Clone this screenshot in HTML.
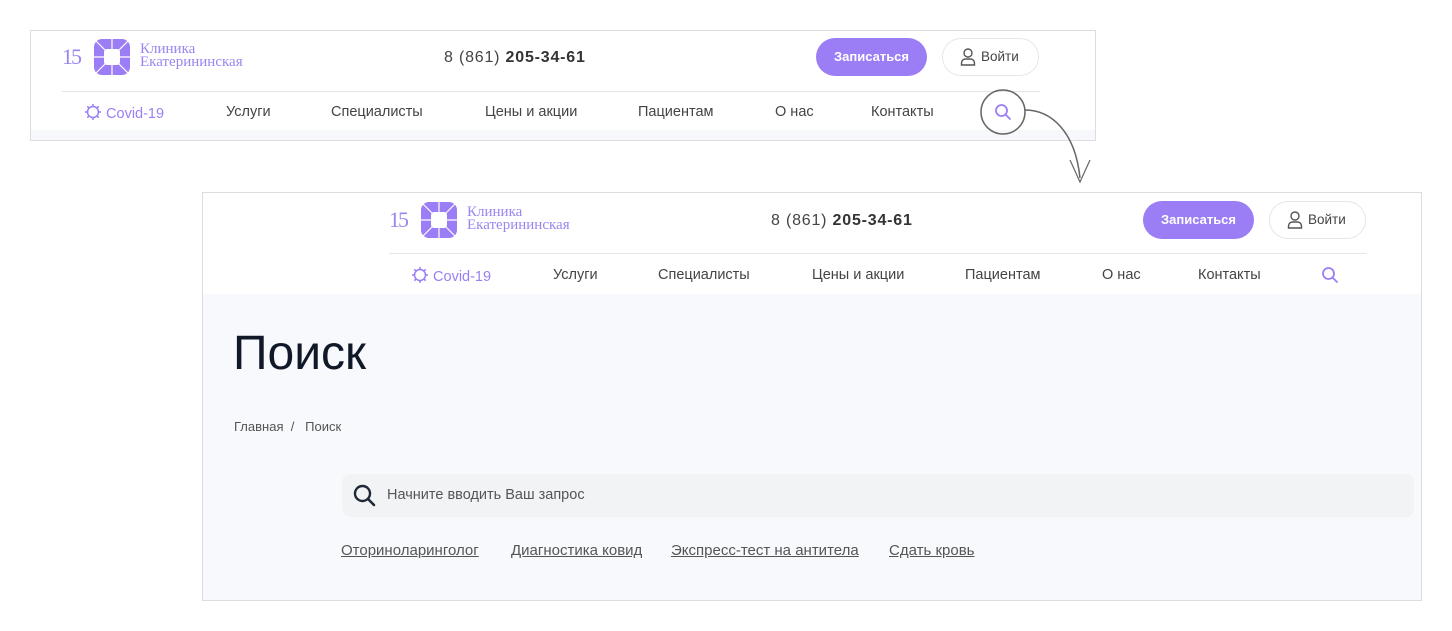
<!DOCTYPE html>
<html><head><meta charset="utf-8"><style>
*{margin:0;padding:0;box-sizing:border-box}
body{width:1452px;height:631px;background:#fff;position:relative;overflow:hidden;font-family:"Liberation Sans",sans-serif;color:#333}
.a{position:absolute;white-space:nowrap}
.hdr{position:absolute;width:1000px;height:110px}
.lt{left:78px;top:13px;font-family:"Liberation Serif",serif;color:#9b86f0;font-size:15px;line-height:13px}
.ph{font-size:16px;color:#444;letter-spacing:.8px}
.ph b{color:#333}
.btn{background:#9b7ef5;color:#fff;font-size:13px;font-weight:bold;border-radius:19px;text-align:center;line-height:38px;height:38px;width:111px}
.in{border:1px solid #e6e6ea;background:#fff;color:#444;font-size:13.5px;border-radius:19px;height:38px;width:97px;line-height:36px;padding-left:38px}
.line{height:1px;background:#e6e6ea;width:978px}
.nav{font-size:14.5px;color:#444}
.cov{color:#9b7ef5}
.lk{position:absolute;top:542px;font-size:15px;color:#555;text-decoration:underline;white-space:nowrap}
</style></head><body>

<div class="a" style="left:30px;top:30px;width:1066px;height:111px;border:1px solid #dcdce2;background:#fff"></div>
<div class="a" style="left:31px;top:130px;width:1064px;height:10px;background:#f7f8fb"></div>

<div class="a" style="left:202px;top:192px;width:1220px;height:409px;border:1px solid #dcdce2;background:#fff"></div>
<div class="a" style="left:203px;top:294px;width:1218px;height:306px;background:#f8f9fd"></div>

<div class="hdr" style="left:62px;top:30px">
 <svg class="a" style="left:0;top:7px" width="72" height="40" viewBox="0 0 72 40">
  <text x="0" y="27" font-family="Liberation Serif" font-size="22" fill="#9b86f0" letter-spacing="-2">15</text>
  <rect x="32" y="2" width="36" height="36" rx="8" fill="#9b7ef5"/>
  <rect x="42" y="12" width="16" height="16" rx="3" fill="#fff"/>
  <path d="M32 2L68 38M68 2L32 38M50 2V12M50 28V38M32 20H42M58 20H68" stroke="#fff" stroke-width="1.2"/>
 </svg>
 <div class="a lt">Клиника<br>Екатерининская</div>
 <div class="a ph" style="left:382px;top:19px">8 (861) <b>205-34-61</b></div>
 <div class="a btn" style="left:754px;top:8px">Записаться</div>
 <div class="a in" style="left:880px;top:8px">Войти
  <svg class="a" style="left:17px;top:9px" width="16" height="18" viewBox="0 0 16 18"><circle cx="8" cy="5" r="4" fill="none" stroke="#555" stroke-width="1.4"/><path d="M1.5 17v-2a4 4 0 0 1 4-4h5a4 4 0 0 1 4 4v2z" fill="none" stroke="#555" stroke-width="1.4"/></svg></div>
 <div class="a line" style="left:0;top:61px"></div>
 <div class="a nav cov" style="left:22px;top:73px">
  <svg width="18" height="18" viewBox="0 0 18 18" style="vertical-align:-3px"><circle cx="9" cy="9" r="5.5" fill="none" stroke="#9b7ef5" stroke-width="1.5"/><path d="M9 1v3M9 14v3M1 9h3M14 9h3M3.3 3.3l2 2M12.7 12.7l2 2M14.7 3.3l-2 2M5.3 12.7l-2 2" stroke="#9b7ef5" stroke-width="1.5"/></svg> Covid-19</div>
 <div class="a nav" style="left:164px;top:74px">Услуги</div>
 <div class="a nav" style="left:269px;top:74px">Специалисты</div>
 <div class="a nav" style="left:423px;top:74px">Цены и акции</div>
 <div class="a nav" style="left:576px;top:74px">Пациентам</div>
 <div class="a nav" style="left:713px;top:74px">О нас</div>
 <div class="a nav" style="left:809px;top:74px">Контакты</div>
 <svg class="a" style="left:932px;top:73px" width="18" height="18" viewBox="0 0 18 18"><circle cx="7.5" cy="7.5" r="5.5" fill="none" stroke="#9b7ef5" stroke-width="1.8"/><path d="M11.5 11.5L16 16" stroke="#9b7ef5" stroke-width="1.8" stroke-linecap="round"/></svg>
</div>

<div class="hdr" style="left:389px;top:193px">
 <svg class="a" style="left:0;top:7px" width="72" height="40" viewBox="0 0 72 40">
  <text x="0" y="27" font-family="Liberation Serif" font-size="22" fill="#9b86f0" letter-spacing="-2">15</text>
  <rect x="32" y="2" width="36" height="36" rx="8" fill="#9b7ef5"/>
  <rect x="42" y="12" width="16" height="16" rx="3" fill="#fff"/>
  <path d="M32 2L68 38M68 2L32 38M50 2V12M50 28V38M32 20H42M58 20H68" stroke="#fff" stroke-width="1.2"/>
 </svg>
 <div class="a lt">Клиника<br>Екатерининская</div>
 <div class="a ph" style="left:382px;top:19px">8 (861) <b>205-34-61</b></div>
 <div class="a btn" style="left:754px;top:8px">Записаться</div>
 <div class="a in" style="left:880px;top:8px">Войти
  <svg class="a" style="left:17px;top:9px" width="16" height="18" viewBox="0 0 16 18"><circle cx="8" cy="5" r="4" fill="none" stroke="#555" stroke-width="1.4"/><path d="M1.5 17v-2a4 4 0 0 1 4-4h5a4 4 0 0 1 4 4v2z" fill="none" stroke="#555" stroke-width="1.4"/></svg></div>
 <div class="a line" style="left:0;top:60px"></div>
 <div class="a nav cov" style="left:22px;top:73px">
  <svg width="18" height="18" viewBox="0 0 18 18" style="vertical-align:-3px"><circle cx="9" cy="9" r="5.5" fill="none" stroke="#9b7ef5" stroke-width="1.5"/><path d="M9 1v3M9 14v3M1 9h3M14 9h3M3.3 3.3l2 2M12.7 12.7l2 2M14.7 3.3l-2 2M5.3 12.7l-2 2" stroke="#9b7ef5" stroke-width="1.5"/></svg> Covid-19</div>
 <div class="a nav" style="left:164px;top:74px">Услуги</div>
 <div class="a nav" style="left:269px;top:74px">Специалисты</div>
 <div class="a nav" style="left:423px;top:74px">Цены и акции</div>
 <div class="a nav" style="left:576px;top:74px">Пациентам</div>
 <div class="a nav" style="left:713px;top:74px">О нас</div>
 <div class="a nav" style="left:809px;top:74px">Контакты</div>
 <svg class="a" style="left:932px;top:73px" width="18" height="18" viewBox="0 0 18 18"><circle cx="7.5" cy="7.5" r="5.5" fill="none" stroke="#9b7ef5" stroke-width="1.8"/><path d="M11.5 11.5L16 16" stroke="#9b7ef5" stroke-width="1.8" stroke-linecap="round"/></svg>
</div>

<svg class="a" style="left:970px;top:80px" width="130" height="110" viewBox="0 0 130 110">
 <circle cx="33" cy="32" r="22" fill="none" stroke="#666" stroke-width="1.5"/>
 <path d="M55 30C80 30 105 50 110 98" fill="none" stroke="#666" stroke-width="1.5"/>
 <path d="M100 80L110 102L120 80" fill="none" stroke="#666" stroke-width="1.2"/>
</svg>

<div class="a" style="left:233px;top:326px;font-size:48px;color:#111827">Поиск</div>
<div class="a" style="left:234px;top:419px;font-size:13px;color:#555">Главная &nbsp;/ &nbsp; Поиск</div>
<div class="a" style="left:342px;top:474px;width:1072px;height:43px;background:#f2f3f5;border-radius:8px"></div>
<svg class="a" style="left:352px;top:483px" width="26" height="26" viewBox="0 0 26 26"><circle cx="10.5" cy="10.5" r="7.5" fill="none" stroke="#1f2937" stroke-width="2.4"/><path d="M16 16L22 22" stroke="#1f2937" stroke-width="2.6" stroke-linecap="round"/></svg>
<div class="a" style="left:387px;top:487px;font-size:14.5px;color:#555">Начните вводить Ваш запрос</div>
<span class="lk" style="left:341px">Оториноларинголог</span>
<span class="lk" style="left:511px">Диагностика ковид</span>
<span class="lk" style="left:671px">Экспресс-тест на антитела</span>
<span class="lk" style="left:889px">Сдать кровь</span>
</body></html>
